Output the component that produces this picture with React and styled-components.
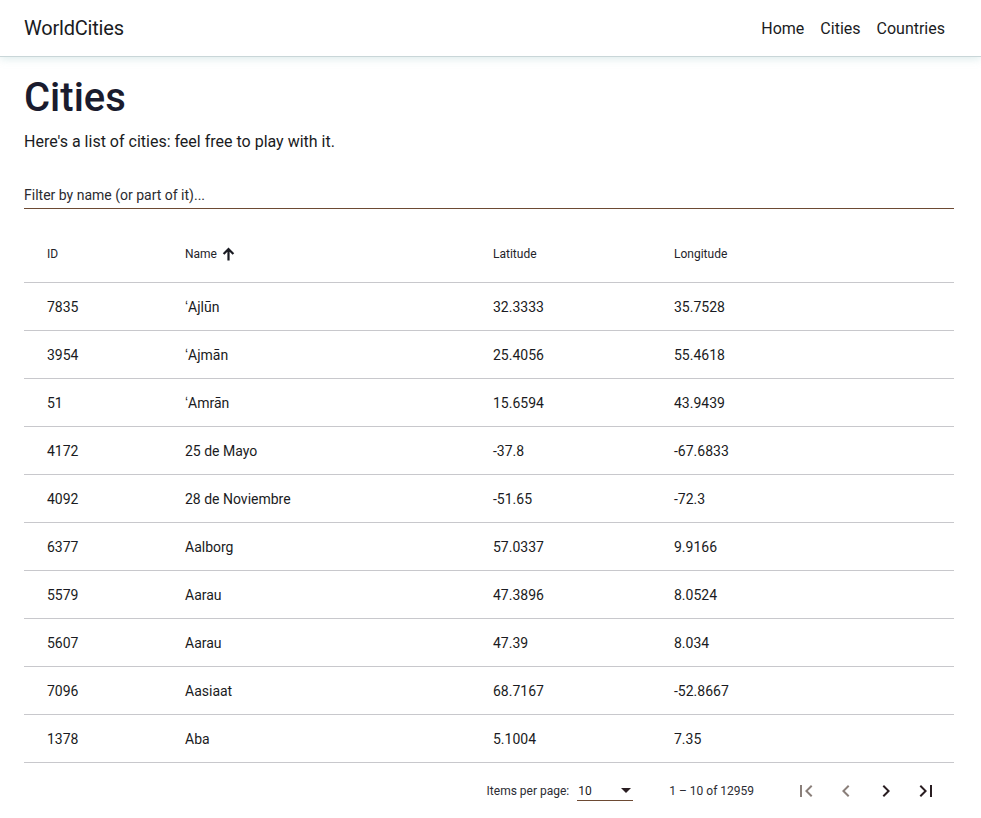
import React from "react";
import styled, { createGlobalStyle } from "styled-components";

const GlobalStyle = createGlobalStyle`
  body {
    margin: 0;
    background: #ffffff;
    font-family: Roboto, "Liberation Sans", sans-serif;
    color: #1a1b22;
  }
`;

const Toolbar = styled.header`
  height: 56px;
  display: flex;
  align-items: center;
  justify-content: space-between;
  padding: 0 36px 0 24px;
  border-bottom: 1px solid #c9d6d8;
  box-shadow: 0 2px 8px rgba(160, 200, 200, 0.35);
  position: relative;
`;

const Brand = styled.div`
  font-size: 20px;
  font-weight: 400;
  letter-spacing: -0.2px;
`;

const Nav = styled.nav`
  display: flex;
  gap: 16px;
`;

const NavLink = styled.a`
  font-size: 16px;
  color: #1a1b22;
  text-decoration: none;
`;

const Main = styled.main`
  padding: 18px 27px 0 24px;
`;

const Title = styled.h1`
  margin: 0;
  font-size: 40px;
  line-height: 46px;
  font-weight: 500;
  color: #1a1b2e;
`;

const Lead = styled.p`
  margin: 9px 0 0;
  font-size: 16px;
  line-height: 24px;
`;

const Filter = styled.div`
  margin-top: 27px;
  height: 28px;
  border-bottom: 1px solid #6d4a33;
  display: flex;
  align-items: flex-end;
  padding-bottom: 5px;
  box-sizing: border-box;
  font-size: 14px;
  color: #2b2b30;
`;

const Table = styled.div`
  margin-top: 18px;
`;

const Row = styled.div`
  display: grid;
  grid-template-columns: 161px 308px 181px 1fr;
  height: ${(p) => (p.head ? "56px" : "48px")};
  align-items: center;
  border-bottom: 1px solid #c8c8cc;
  box-sizing: border-box;
  font-size: ${(p) => (p.head ? "12px" : "14px")};
  font-weight: 400;
  color: ${(p) => (p.head ? "#24242a" : "#1a1b22")};
`;

const Cell = styled.div`
  padding-left: ${(p) => (p.first ? "23px" : "0")};
  display: flex;
  align-items: center;
  gap: 5px;
  margin-top: ${(p) => (p.head ? "-2px" : "0")};
`;

const Paginator = styled.div`
  display: flex;
  align-items: center;
  justify-content: flex-end;
  height: 56px;
  font-size: 12px;
  color: #2c2c33;
  padding-right: 8px;
`;

const PerPage = styled.div`
  display: flex;
  align-items: center;
  gap: 8px;
`;

const Select = styled.div`
  width: 56px;
  height: 20px;
  border-bottom: 1px solid #6d4a33;
  box-sizing: border-box;
  display: flex;
  align-items: center;
  justify-content: space-between;
  padding: 0 2px 0 1px;
  font-size: 12px;
  color: #1a1b22;
`;

const Range = styled.div`
  margin-left: 36px;
  margin-right: 32px;
`;

const IconButton = styled.button`
  width: 40px;
  height: 40px;
  border: none;
  background: none;
  padding: 0;
  display: flex;
  align-items: center;
  justify-content: center;
  color: ${(p) => (p.disabled ? "#8a7f7a" : "#2a1e22")};
`;

const cities = [
  [7835, "ʻAjlūn", "32.3333", "35.7528"],
  [3954, "ʻAjmān", "25.4056", "55.4618"],
  [51, "ʻAmrān", "15.6594", "43.9439"],
  [4172, "25 de Mayo", "-37.8", "-67.6833"],
  [4092, "28 de Noviembre", "-51.65", "-72.3"],
  [6377, "Aalborg", "57.0337", "9.9166"],
  [5579, "Aarau", "47.3896", "8.0524"],
  [5607, "Aarau", "47.39", "8.034"],
  [7096, "Aasiaat", "68.7167", "-52.8667"],
  [1378, "Aba", "5.1004", "7.35"],
];

const Icon = ({ d }) => (
  <svg width="24" height="24" viewBox="0 0 24 24" fill="currentColor">
    <path d={d} />
  </svg>
);

const FIRST = "M18.41 16.59L13.82 12l4.59-4.59L17 6l-6 6 6 6zM6 6h2v12H6z";
const PREV = "M15.41 7.41L14 6l-6 6 6 6 1.41-1.41L10.83 12z";
const NEXT = "M10 6L8.59 7.41 13.17 12l-4.58 4.59L10 18l6-6z";
const LAST = "M5.59 7.41L10.18 12l-4.59 4.59L7 18l6-6-6-6zM16 6h2v12h-2z";

const App = () => {
  return (
    <>
      <GlobalStyle />
      <Toolbar>
        <Brand>WorldCities</Brand>
        <Nav>
          <NavLink href="#">Home</NavLink>
          <NavLink href="#">Cities</NavLink>
          <NavLink href="#">Countries</NavLink>
        </Nav>
      </Toolbar>
      <Main>
        <Title>Cities</Title>
        <Lead>Here's a list of cities: feel free to play with it.</Lead>
        <Filter>Filter by name (or part of it)...</Filter>
        <Table>
          <Row head>
            <Cell first head>ID</Cell>
            <Cell head>
              Name
              <svg width="13" height="14" viewBox="0 0 13 14" fill="#1a1b22">
                <path d="M6.5 0.5L0.8 6.2l1.6 1.6 3-3V13.5h2.2V4.8l3 3 1.6-1.6z" />
              </svg>
            </Cell>
            <Cell head>Latitude</Cell>
            <Cell head>Longitude</Cell>
          </Row>
          {cities.map(([id, name, lat, lon]) => (
            <Row key={id}>
              <Cell first>{id}</Cell>
              <Cell>{name}</Cell>
              <Cell>{lat}</Cell>
              <Cell>{lon}</Cell>
            </Row>
          ))}
        </Table>
        <Paginator>
          <PerPage>
            Items per page:
            <Select>
              10
              <svg width="10" height="5" viewBox="0 0 10 5" fill="#2a1e22">
                <path d="M0 0l5 5 5-5z" />
              </svg>
            </Select>
          </PerPage>
          <Range>1 – 10 of 12959</Range>
          <IconButton disabled><Icon d={FIRST} /></IconButton>
          <IconButton disabled><Icon d={PREV} /></IconButton>
          <IconButton><Icon d={NEXT} /></IconButton>
          <IconButton><Icon d={LAST} /></IconButton>
        </Paginator>
      </Main>
    </>
  );
};

export default App;
